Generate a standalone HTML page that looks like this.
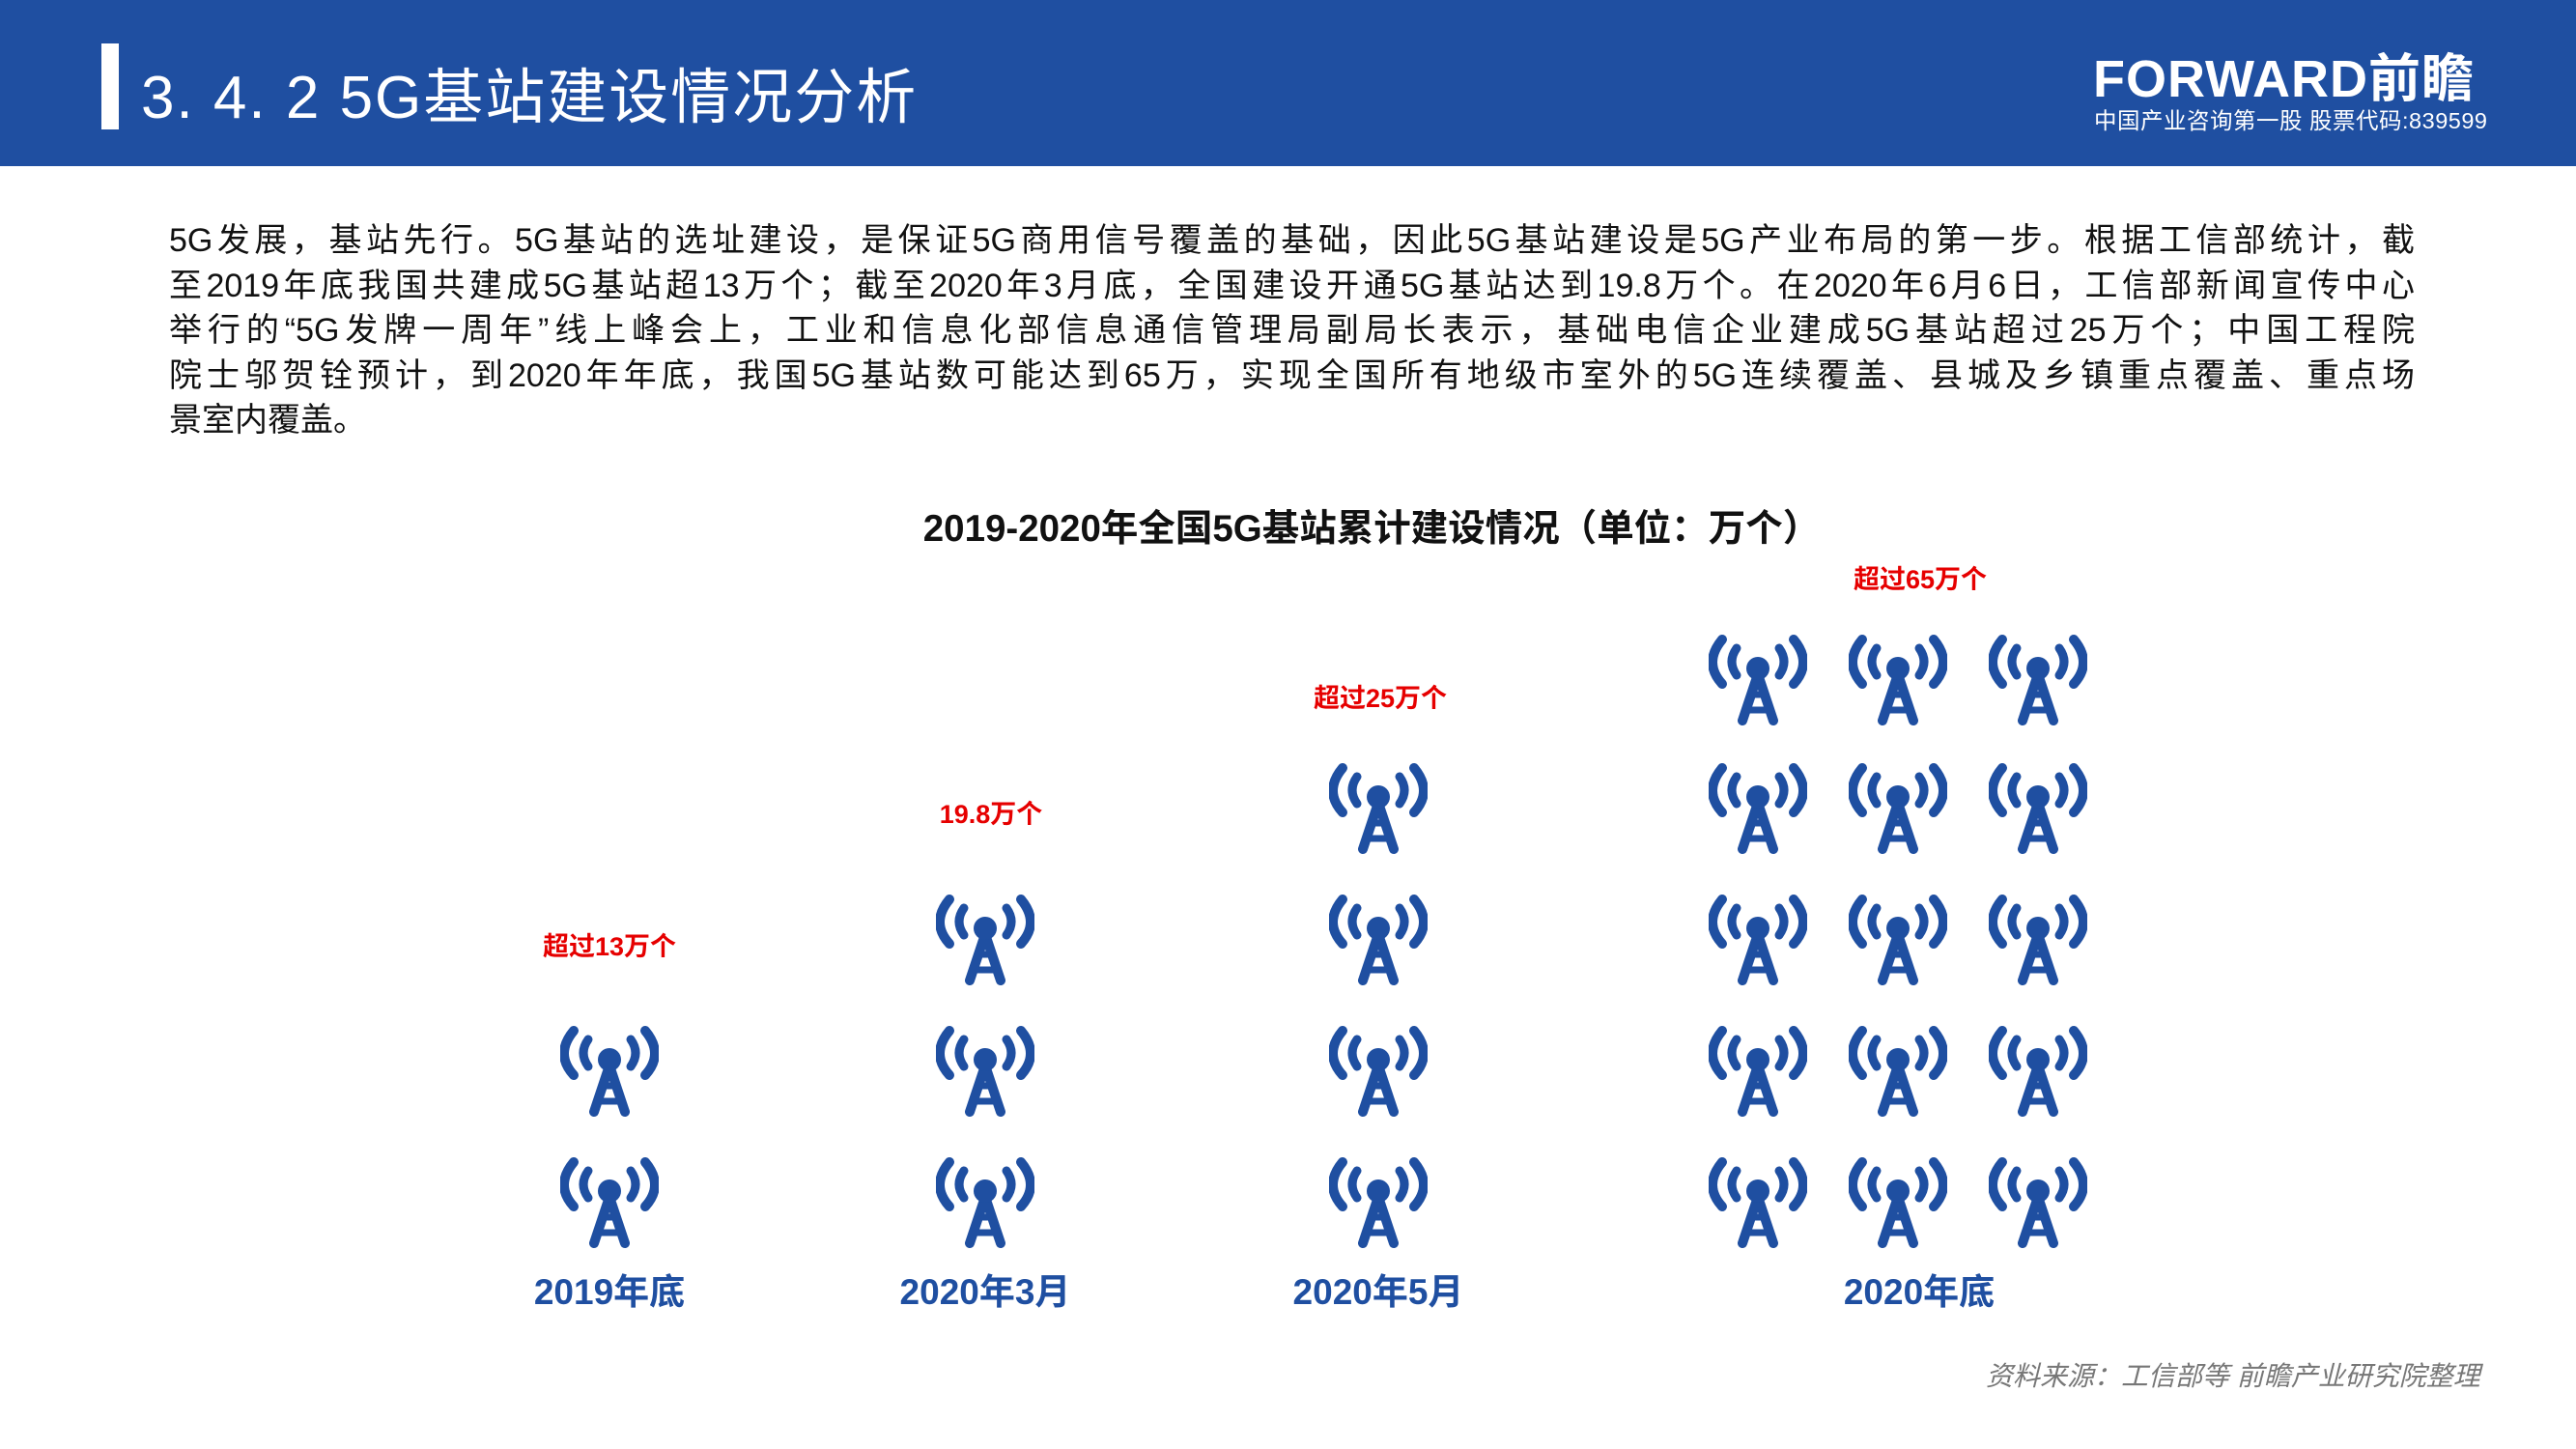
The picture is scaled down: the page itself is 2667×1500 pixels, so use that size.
<!DOCTYPE html>
<html><head><meta charset="utf-8"><style>
*{margin:0;padding:0;box-sizing:border-box}
body{width:2667px;height:1500px;position:relative;background:#fff;overflow:hidden;font-family:"Liberation Sans","Noto Sans CJK SC",sans-serif}
.hdr{position:absolute;left:0;top:0;width:2667px;height:172px;background:#1f4fa1}
.bar{position:absolute;left:105px;top:45px;width:18px;height:89px;background:#fff}
.title{position:absolute;left:146px;top:66px;font-size:62px;color:#fff;line-height:72px;letter-spacing:2px;font-family:"Liberation Sans","Noto Sans CJK SC",sans-serif;white-space:pre}
.logo{position:absolute;left:2167px;top:54px;color:#fff;font-weight:bold;font-size:54px;line-height:56px;letter-spacing:1px}
.logo2{position:absolute;left:2168px;top:112px;color:#fff;font-size:23.5px;line-height:26px;letter-spacing:0.5px}
.para{position:absolute;left:175px;top:226px;width:2325px;font-size:34px;color:#111}
.para div{height:46.5px;line-height:46.5px;text-align:justify;text-align-last:justify;white-space:nowrap;overflow:visible}
.para div.last{text-align-last:left}
.ct{position:absolute;left:0;width:2840px;top:516px;text-align:center;font-size:38.5px;font-weight:bold;color:#111}
.ic{position:absolute;width:102px;height:96px}
.red{position:absolute;width:300px;text-align:center;color:#e60000;font-weight:bold;font-size:27px;line-height:30px}
.lab{position:absolute;width:400px;text-align:center;color:#1f4fa1;font-weight:bold;font-size:37px;line-height:40px}
.src{position:absolute;left:2056px;top:1408px;font-size:28px;color:#777;font-style:italic;line-height:34px}
</style></head><body>
<svg width="0" height="0" style="position:absolute"><defs>
<g id="t" fill="none" stroke="#1f4fa1" stroke-linecap="round">
<path d="M14 6 Q-6 30 14 52" stroke-width="10"/>
<path d="M88 6 Q108 30 88 52" stroke-width="10"/>
<path d="M29 15 Q19 29 29 43" stroke-width="9"/>
<path d="M73 15 Q83 29 73 43" stroke-width="9"/>
<path d="M51 42 L35 90 M51 42 L67 90" stroke-width="10"/>
<path d="M40 63 H62 M36 79 H66" stroke-width="7" stroke-linecap="butt"/>
<circle cx="51" cy="36" r="12" fill="#1f4fa1" stroke="none"/>
</g></defs></svg>
<div class="hdr"></div><div class="bar"></div>
<div class="title">3. 4. 2 5G基站建设情况分析</div>
<div class="logo">FORWARD前瞻</div>
<div class="logo2">中国产业咨询第一股 股票代码:839599</div>
<div class="para">
<div>5G发展，基站先行。5G基站的选址建设，是保证5G商用信号覆盖的基础，因此5G基站建设是5G产业布局的第一步。根据工信部统计，截</div>
<div>至2019年底我国共建成5G基站超13万个；截至2020年3月底，全国建设开通5G基站达到19.8万个。在2020年6月6日，工信部新闻宣传中心</div>
<div>举行的“5G发牌一周年”线上峰会上，工业和信息化部信息通信管理局副局长表示，基础电信企业建成5G基站超过25万个；中国工程院</div>
<div>院士邬贺铨预计，到2020年年底，我国5G基站数可能达到65万，实现全国所有地级市室外的5G连续覆盖、县城及乡镇重点覆盖、重点场</div>
<div class="last">景室内覆盖。</div>
</div>
<div class="ct">2019-2020年全国5G基站累计建设情况（单位：万个）</div>
<div id="icons"></div>
<div class="red" style="left:481px;top:965px">超过13万个</div>
<div class="red" style="left:876px;top:828px">19.8万个</div>
<div class="red" style="left:1279px;top:708px">超过25万个</div>
<div class="red" style="left:1838px;top:585px">超过65万个</div>
<div class="lab" style="left:431px;top:1318px">2019年底</div>
<div class="lab" style="left:820px;top:1318px">2020年3月</div>
<div class="lab" style="left:1227px;top:1318px">2020年5月</div>
<div class="lab" style="left:1787px;top:1318px">2020年底</div>
<div class="src">资料来源：工信部等 前瞻产业研究院整理</div>
<script>
var rows=[1245,1109,973,837,704];
var cols=[[631,2],[1020,3],[1427,4],[1820,5],[1965,5],[2110,5]];
var h='';
cols.forEach(function(c){for(var i=0;i<c[1];i++){h+='<svg class="ic" viewBox="0 0 102 96" style="left:'+(c[0]-51)+'px;top:'+(rows[i]-48)+'px"><use href="#t"/></svg>';}});
document.getElementById('icons').innerHTML=h;
</script>
</body></html>
